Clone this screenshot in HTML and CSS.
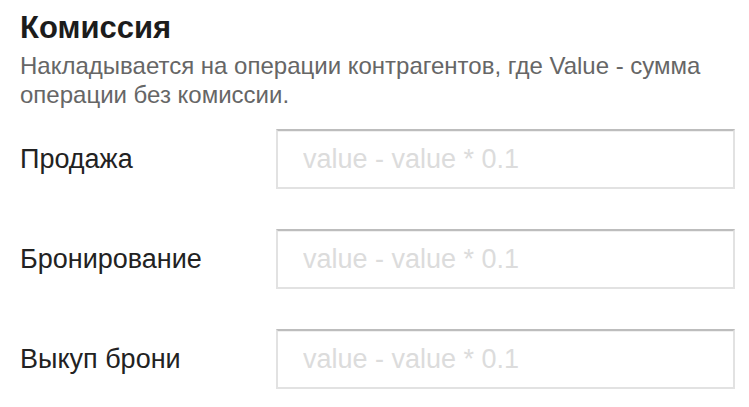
FILE: index.html
```html
<!DOCTYPE html>
<html lang="ru">
<head>
<meta charset="utf-8">
<link rel="stylesheet" href="styles.css">
</head>
<body>
<section class="commission">
  <h2 class="title">Комиссия</h2>
  <p class="desc">Накладывается на операции контрагентов, где Value - сумма операции без комиссии.</p>
  <div class="rows">
    <label class="label" for="f1">Продажа</label>
    <input class="field" id="f1" type="text" placeholder="value - value * 0.1">
    <label class="label" for="f2">Бронирование</label>
    <input class="field" id="f2" type="text" placeholder="value - value * 0.1">
    <label class="label" for="f3">Выкуп брони</label>
    <input class="field" id="f3" type="text" placeholder="value - value * 0.1">
  </div>
</section>
</body>
</html>
```
FILE: styles.css
```css
html, body {
  margin: 0;
  padding: 0;
  background: #fff;
}
body {
  font-family: "Liberation Sans", Arial, sans-serif;
}
.commission {
  padding: 10px 14px 0 20px;
}
.title {
  margin: 0;
  font-size: 31px;
  font-weight: bold;
  line-height: 36px;
  color: #1c1c1c;
}
.desc {
  margin: 5px 0 0;
  font-size: 24px;
  line-height: 29px;
  color: #666;
  width: 700px;
}
.rows {
  margin-top: 20px;
  display: grid;
  grid-template-columns: 256px 459px;
  row-gap: 40px;
  align-items: center;
}
.label {
  font-size: 27px;
  color: #222;
}
.field {
  box-sizing: border-box;
  width: 459px;
  height: 60px;
  margin: 0;
  padding: 0 0 0 25px;
  border: 2px solid #e2e2e2;
  border-top-color: #bdbdbd;
  box-shadow: inset 0 1px 0 #f0f0f0;
  border-radius: 0;
  font-family: "Liberation Sans", Arial, sans-serif;
  font-size: 27px;
  color: #333;
  background: #fff;
  outline: none;
}
.field::placeholder {
  color: #dcdcdc;
  opacity: 1;
}
```
